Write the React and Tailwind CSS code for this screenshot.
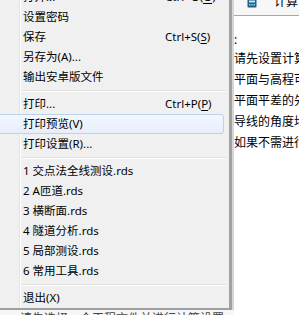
import React from "react";

const FONT = { fontFamily: '"Noto Sans", "Noto Sans CJK SC", sans-serif' };

function Row({ label, shortcut, hl }) {
  return (
    <div className={"flex h-[20px] items-center " + (hl ? "-ml-[4px] mr-[2px] rounded-[3px] border border-[#b8d2ef] bg-gradient-to-b from-[#f3f8fe] to-[#e5eefa]" : "")}>
      <div className={"h-full shrink-0 " + (hl ? "w-[23px]" : "w-[20px] border-r border-[#e2e3e3]")} />
      <div className={"h-full w-px shrink-0 " + (hl ? "" : "bg-white")} />
      <div className="w-[144px] shrink-0 pl-[2px] whitespace-nowrap">{label}</div>
      {shortcut ? <div className="whitespace-nowrap">{shortcut}</div> : null}
    </div>
  );
}

function Sep() {
  return (
    <div className="flex h-[7px]">
      <div className="h-full w-[20px] shrink-0 border-r border-[#e2e3e3]" />
      <div className="h-full w-px shrink-0 bg-white" />
      <div className="flex flex-1 flex-col justify-center pl-[1px]">
        <div className="h-px bg-[#e0e0e0]" />
        <div className="h-px bg-white" />
      </div>
    </div>
  );
}

function U({ children }) {
  return <span className="underline underline-offset-[2px]">{children}</span>;
}

export default function App() {
  return (
    <div className="relative h-[315px] w-[299px] overflow-hidden bg-white text-black" style={FONT}>
      <div className="flex h-full">
        {/* menu column */}
        <div className="flex w-[234px] shrink-0 flex-col">
          <div className="flex h-[310px]">
            <div className="flex w-[232px] flex-col overflow-hidden border-r-[3px] border-b-[2px] border-[#a0a0a0] bg-[#f0f0f0] text-[11.5px]">
              <div className="-mt-[13px] flex flex-col pr-[3px]">
                <Row label="打开..." shortcut={<>Ctrl+O(<U>O</U>)</>} />
                <Row label="设置密码" />
                <Row label="保存" shortcut={<>Ctrl+S(<U>S</U>)</>} />
                <Row label="另存为(A)..." />
                <Row label="输出安卓版文件" />
                <Sep />
                <Row label="打印..." shortcut={<>Ctrl+P(<U>P</U>)</>} />
                <Row label="打印预览(V)" hl />
                <Row label="打印设置(R)..." />
                <Sep />
                <Row label="1 交点法全线测设.rds" />
                <Row label="2 A匝道.rds" />
                <Row label="3 横断面.rds" />
                <Row label="4 隧道分析.rds" />
                <Row label="5 局部测设.rds" />
                <Row label="6 常用工具.rds" />
                <Sep />
                <Row label="退出(X)" />
              </div>
            </div>
            <div className="w-[2px] bg-[#d6d6d6]" />
          </div>
          <div className="h-[5px] overflow-hidden bg-[#f6f6f6] pl-[20px]">
            <div className="mt-[1px] whitespace-nowrap text-[12px] leading-[16px] text-[#444]">
              请先选择<span className="text-[#2a3fc0]">一</span>个工程文件并进行计算设置
            </div>
          </div>
        </div>
        {/* right panel */}
        <div className="flex min-w-0 flex-1 flex-col overflow-hidden">
          <div className="flex h-[16px] shrink-0 items-start gap-[17px] overflow-hidden border-b border-[#a8a8a8] bg-[#f7f7f7] pl-[13px]">
            <svg width="10" height="9" viewBox="0 0 10 9" className="-mt-[1px] shrink-0">
              <rect x="0.5" y="0.5" width="9" height="8" rx="1" fill="#1f5f8a" />
              <rect x="2" y="1.5" width="6" height="2" fill="#bfe6f0" />
              <rect x="2" y="5" width="1.5" height="1.5" fill="#8fd0e0" />
              <rect x="4.3" y="5" width="1.5" height="1.5" fill="#8fd0e0" />
              <rect x="6.5" y="5" width="1.5" height="1.5" fill="#8fd0e0" />
            </svg>
            <div className="-mt-[6px] whitespace-nowrap text-[12px] leading-[16px]">计算</div>
          </div>
          <div className="flex flex-col whitespace-nowrap pt-[13px] text-[12px] leading-[21px]">
            <div className="-mb-[2px]">:</div>
            <div>请先设置计算参数，然后进行计算</div>
            <div>平面与高程可以分别进行平差</div>
            <div>平面平差的先后顺序不影响结果</div>
            <div>导线的角度均按左角输入</div>
            <div>如果不需进行高程平差请不勾选</div>
          </div>
        </div>
      </div>
    </div>
  );
}
